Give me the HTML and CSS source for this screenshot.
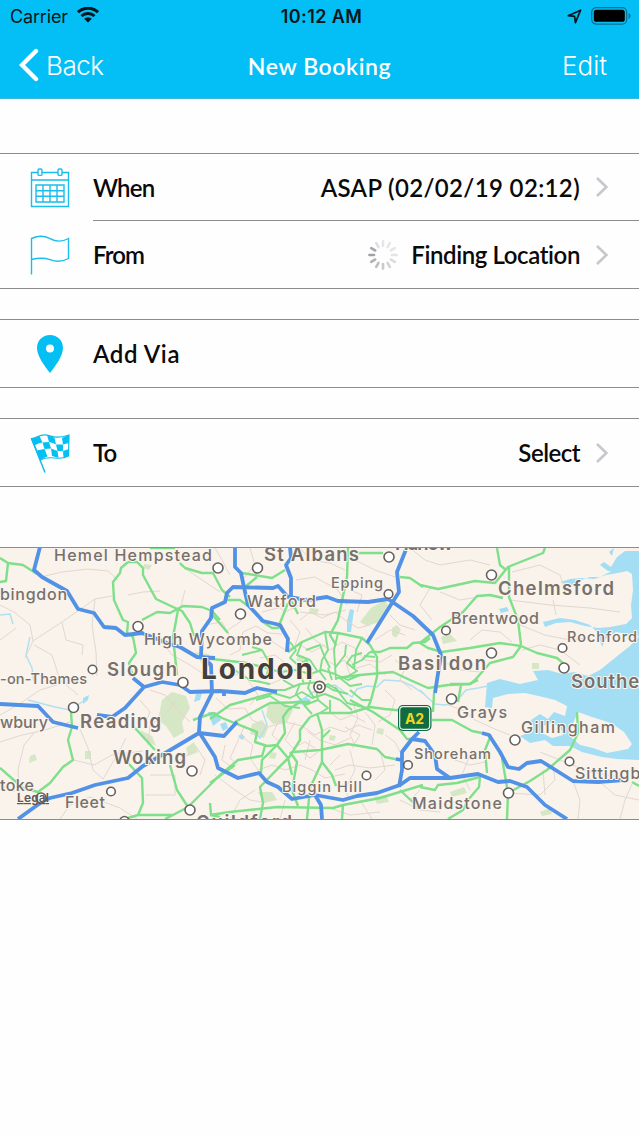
FILE: index.html
```
<!DOCTYPE html>
<html lang="en">

<head>
  <meta charset="UTF-8">
  <meta name="viewport" content="width=device-width, initial-scale=1.0">
  <title>New Booking</title>
  <link rel="stylesheet" href="styles.css">
</head>

<body>

  <header>
    <div class="status-bar">
      <div class="carrier">
        <span>Carrier</span>
        <svg width="22" height="16" viewBox="0 0 22 16">
          <path d="M1 5.2 A14.4 14.4 0 0 1 21 5.2" fill="none" stroke="#06161c" stroke-width="3" />
          <path d="M4.5 9 A9.4 9.4 0 0 1 17.5 9" fill="none" stroke="#06161c" stroke-width="3" />
          <path d="M11 15.6 L7.2 11.8 A5.4 5.4 0 0 1 14.8 11.8 Z" fill="#06161c" />
        </svg>
      </div>
      <div class="time">10:12 AM</div>
      <div class="battery">
        <svg width="15" height="15" viewBox="0 0 15 15">
          <path d="M1.2 6.7 L13.6 1.2 L8.4 13.6 L7.6 7.4 Z" fill="none" stroke="#06161c" stroke-width="1.7" stroke-linejoin="round" />
        </svg>
        <svg width="40" height="18" viewBox="0 0 40 18">
          <rect x=".7" y=".7" width="35" height="16.4" rx="4.5" fill="none" stroke="#06708f" stroke-width="1.2" />
          <rect x="2.8" y="2.8" width="31" height="12" rx="2.6" fill="#000" />
          <path d="M37.6 6 Q39.6 7 39.6 9 Q39.6 11 37.6 12 Z" fill="#06708f" />
        </svg>
      </div>
    </div>
    <nav class="navbar">
      <a class="back">
        <svg width="20" height="34" viewBox="0 0 20 34">
          <path d="M17 3 L3 17 L17 31" fill="none" stroke="#fff" stroke-width="4.4" stroke-linecap="round" />
        </svg>
        <span>Back</span>
      </a>
      <h1>New Booking</h1>
      <a class="edit">Edit</a>
    </nav>
  </header>

  <main>
    <section class="group">
      <div class="row">
        <svg class="icon" width="40" height="40" viewBox="0 0 40 40" fill="none" stroke="#1abdeb" stroke-width="1.4">
          <path d="M8 4.5 H1.5 V38.5 H38.5 V4.5 H32 M28 4.5 H12 M1.5 12 H38.5" />
          <rect x="8" y="1" width="4" height="6.4" rx="1.2" />
          <rect x="28" y="1" width="4" height="6.4" rx="1.2" />
          <path d="M6 17 H34 V34 H6 Z M6 22.7 H34 M6 28.3 H34 M13 17 V34 M20 17 V34 M27 17 V34" />
        </svg>
        <div class="cell divided">
          <span class="label when">When</span>
          <span class="value asap">ASAP (02/02/19 02:12)</span>
          <svg class="chevron" width="14" height="22" viewBox="0 0 14 22">
            <path d="M2 2 L11.4 11 L2 20" />
          </svg>
        </div>
      </div>
      <div class="row">
        <svg class="icon" width="40" height="40" viewBox="0 0 40 40" fill="none" stroke="#1abdeb" stroke-width="1.4">
          <path d="M1.5 39.5 V3.5 C8 .5 15 1 20 3.7 C26 7 33 6.500 38.500 3.500 V23.500 C33 26.500 26 27 20 24.700 C14 22.500 8 23 1.500 24.500" />
        </svg>
        <div class="cell">
          <span class="label from">From</span>
          <svg class="spinner" width="32" height="32" viewBox="-16 -16 32 32" stroke-width="2.6" stroke-linecap="round">
            <path d="M0 -9 V-13.600" stroke="#e6e6e9" />
            <path d="M0 -9 V-13.600" stroke="#e6e6e9" transform="rotate(30)" />
            <path d="M0 -9 V-13.600" stroke="#e6e6e9" transform="rotate(60)" />
            <path d="M0 -9 V-13.600" stroke="#e3e3e6" transform="rotate(90)" />
            <path d="M0 -9 V-13.600" stroke="#dcdcdf" transform="rotate(120)" />
            <path d="M0 -9 V-13.600" stroke="#d3d3d6" transform="rotate(150)" />
            <path d="M0 -9 V-13.600" stroke="#cacacd" transform="rotate(180)" />
            <path d="M0 -9 V-13.600" stroke="#bebec2" transform="rotate(210)" />
            <path d="M0 -9 V-13.600" stroke="#b2b2b6" transform="rotate(240)" />
            <path d="M0 -9 V-13.600" stroke="#a0a0a5" transform="rotate(270)" />
            <path d="M0 -9 V-13.600" stroke="#a8a8ac" transform="rotate(300)" />
            <path d="M0 -9 V-13.600" stroke="#dfdfe2" transform="rotate(330)" />
          </svg>
          <span class="value finding">Finding Location</span>
          <svg class="chevron" width="14" height="22" viewBox="0 0 14 22">
            <path d="M2 2 L11.4 11 L2 20" />
          </svg>
        </div>
      </div>
    </section>

    <section class="group">
      <div class="row">
        <svg class="icon" width="40" height="40" viewBox="0 0 40 40">
          <path fill-rule="evenodd" fill="#04bff3" d="M20 1 C27.500 1 33 6.500 33 14 C33 22 25.500 32 20 39 C14.500 32 7 22 7 14 C7 6.500 12.500 1 20 1 Z M20 10.500 A4 4 0 1 0 20 18.500 A4 4 0 1 0 20 10.500 Z" />
        </svg>
        <div class="cell">
          <span class="label via">Add Via</span>
        </div>
      </div>
    </section>

    <section class="group">
      <div class="row">
        <svg class="icon" width="40" height="40" viewBox="0 0 40 40">
          <path fill="#fff" stroke="#14b9e8" stroke-width="1.200" d="M1.500 5.500 C6 5.500 9 1.500 15 1.800 C21 2 24 7 39 2 L38.500 23 C28 29 21 21 10.500 27 Z" />
          <path fill="none" stroke="#14b9e8" stroke-width="1.500" d="M1.500 5.500 L15 39.500" />
          <g fill="#04bff3">
            <path d="M1.500 5.500 Q6 5 9.500 3 L12.500 9.500 Q8 10 4.500 12.500 Z" />
            <path d="M17 2 Q21 3 24.500 4.700 L26 11.500 Q23 9.500 19 9 Z" />
            <path d="M32 5 L39 2 V10 L33 11.500 Z" />
            <path d="M12.500 9.500 L19 9 L21 15.500 L14.500 16 Z" />
            <path d="M26 11.500 L33 11.500 V18 L27.500 18 Z" />
            <path d="M6.500 17.500 L14.500 16 L17.500 23.500 Q13 24.500 10.500 27 Z" />
            <path d="M21 15.500 L27.500 18 L28.500 25 Q24 23.500 22 23 Z" />
            <path d="M33 18 L39 16 L38.500 23 L33.500 25 Z" />
          </g>
        </svg>
        <div class="cell">
          <span class="label to">To</span>
          <span class="value select">Select</span>
          <svg class="chevron" width="14" height="22" viewBox="0 0 14 22">
            <path d="M2 2 L11.4 11 L2 20" />
          </svg>
        </div>
      </div>
    </section>

    <section class="map">
      <svg width="639" height="271" viewBox="0 548 639 271">
        <rect y="548" width="639" height="271" fill="#f9f3eb" />

        <!-- parks -->
        <g class="park">
          <path d="M162 700 l10 -8 14 4 4 12 -8 14 2 10 -10 6 -8 -12 -8 -6 Z" />
          <path d="M268 705 l16 -3 9 8 -6 12 -14 2 -7 -8 Z" />
          <path d="M252 724 l10 -4 6 8 -4 10 -14 -4 Z" />
          <path d="M371 608 l14 -8 3 6 -9 16 -12 4 -7 -4 Z" />
          <path d="M392 628 l5 -3 4 5 -5 8 -4 -3 Z" />
          <path d="M441 637 l8 -4 8 8 -14 3 Z" />
          <path d="M30 756 l5 -2 2 6 -8 3 Z M85 751 h6 v8 h-6 Z" />
          <path d="M186 748 l8 -6 4 10 -10 4 Z M140 730 l12 6 4 10 -12 -6 Z" />
          <path d="M258 792 l14 0 5 8 -13 3 Z M310 608 l9 1 -2 5 -8 -1 Z" />
          <path d="M378 728 l6 1 -1 6 -7 -2 Z M450 792 l14 -5 3 6 -15 4 Z" />
          <path d="M540 812 l10 -4 2 6 -10 2 Z M532 663 h7 v6 h-7 Z" />
          <path d="M195 652 l14 2 4 14 -10 -2 Z M374 797 l12 -2 3 7 -12 2 Z" />
          <path d="M144 564 l8 1 -3 5 -6 -2 Z M298 655 l6 1 -1 6 -7 -1 Z" />
          <path d="M270 752 l7 1 -2 6 -6 -1 Z M330 735 l6 1 -2 5 -5 -1 Z" />
        </g>

        <!-- sea, estuary and lakes -->
        <g class="water">
          <path d="M639 556 L628 558 L622 570 L612 571 L600 577 L590 577 L578 581 L570 586 L560 582 L570 579 L582 578 L594 579 L606 575 L618 573 L627 571 L632 574 L633 590 L631 605 L632 618 L626 624 L610 627 L598 628 L585 626 L570 622 L556 623 L545 627 L543 622 L560 618 L575 620 L590 625 L598 633 L602 647 L606 638 L616 632 L639 636 Z" />
          <path d="M639 636 L630 646 L616 657 L600 670 L588 676 L574 672 L562 674 L548 670 L533 671 L538 680 L520 684 L500 679 L487 683 L485 707 L492 708 L493 698 L508 694 L525 693 L543 697 L555 700 L567 706 L565 716 L554 712 L548 719 L540 714 L531 720 L528 733 L520 736 L530 743 L545 740 L553 746 L570 746 L582 752 L602 757 L617 759 L639 760 Z" />
          <path d="M639 551 L625 551 L617 557 L611 567 L604 562 L600 565 L608 571 L618 572 L639 568 Z M609 552 L614 548 L612 556 Z" />
          <path d="M347 621 l3 -12 4 1 -3 22 -4 0 Z M499 609 l8 -2 2 4 -8 2 Z" />
          <path d="M295 702 l10 -5 6 3 -6 6 Z M208 712 l8 0 5 8 -8 6 Z M238 736 l4 -2 3 3 -3 3 Z M83 698 l6 -3 -1 5 -5 4 Z" />
          <path d="M196 694 l6 -1 -2 7 -6 2 Z M220 724 l6 -2 2 6 -5 3 Z" />
        </g>
        <path class="land" d="M578 712 L592 717 L611 723 L624 732 L632 744 L628 749 L607 753 L593 748 L580 745 L572 738 L570 730 Z" />
        <path class="land" d="M541 727 L550 723 L560 726 L563 735 L552 738 L544 734 Z" />
        <path class="river" stroke-width="4" d="M420 690 L427 697 L435 704 L445 705 L456 702 L466 690 L478 688 L488 686" />
        <path class="river" stroke-width="3" d="M320 688 L335 685 L343 691 L352 697 L357 689 L367 686 L377 687 L384 680 L401 681 L412 686 L424 694" />
        <path class="river" d="M320 688 L310 694 L302 700 L290 703 M262 710 L267 725 L260 738 L252 730 M0 615 L10 614 L13 624 M30 637 L26 655 L32 668 L34 682 M28 700 L55 707 L70 710 L85 700" />

        <!-- minor roads -->
        <g class="lane">
          <path d="M0 605 L14 612 L30 625 L33 641 L25 658 M41 577 L62 572 L88 569 L108 571 L118 580 M33 641 L62 622 L95 599 L112 596 M62 622 L66 640 L83 645 L82 655" />
          <path d="M0 640 L16 628 M34 645 L52 655 L60 680 L78 695 M128 595 L143 592 L160 591 M185 590 L180 610 M220 592 L180 565 L178 548 M95 599 L92 625 L96 652 L97 676" />
          <path d="M0 715 L18 705 L40 690 L60 684 M0 742 L22 735 L45 730 L70 722 M20 800 L18 770 L24 745 L34 733 M80 729 L88 748 L93 770 L103 779 M103 779 L120 750 L126 738" />
          <path d="M74 760 L94 765 L112 755 L143 751 M150 775 H175 V795 H145 M60 819 L70 805 L90 797 L120 808 L137 819 M0 785 L15 792 M176 700 L165 715 L150 725 L148 745" />
          <path d="M215 548 L222 560 L230 575 M250 548 L255 565 L242 580 M300 548 L310 560 L330 563 L345 570 M296 580 L315 577 L338 590 L347 605 M300 612 L325 615 L346 610 M355 560 L375 570 L395 577" />
          <path d="M410 548 L425 560 L440 565 L470 560 L490 565 M430 588 L420 605 L432 620 M440 592 L460 600 L478 597 M512 572 L540 565 L560 575 L565 590 M510 600 L550 605 L590 608 L620 612 M556 615 L553 600" />
          <path d="M520 625 L545 635 L570 640 L585 638 M522 650 L540 645 L560 650 L580 665 M470 640 L482 630 L500 632 L512 642 M440 660 L460 670 L480 672 M448 705 L462 710 L475 720 L497 730 L510 735" />
          <path d="M400 800 L420 810 L440 812 M510 793 L540 795 L555 780 L553 765 M543 770 L545 795 M573 781 L580 800 L578 819 M600 782 L615 795 L639 800 M540 752 L560 760 L590 772 L620 777 M620 819 L625 800 L632 784" />
          <path d="M350 750 L355 770 L345 790 L350 800 M380 750 L385 770 L375 780 M335 770 L350 765 L370 768 L395 765 M345 727 L360 735 L352 748 M365 712 L375 725 L372 745 M385 735 L395 742 L400 752" />
          <path d="M215 775 L235 790 L250 800 L262 802 M230 819 L240 800 L255 790 M285 800 L280 819 M330 808 L350 815 L380 812 M360 800 L372 819 M420 790 L410 800 M455 760 L470 765 L485 762 M470 755 L462 775 L470 790" />
        </g>
        <g class="street">
          <path d="M222 640 L240 637 L255 645 L270 640 L285 650 L300 645 L312 652 L325 645 M230 655 L240 650 L243 632 L256 626 L268 633 L282 634 M245 610 L240 622 L228 630 M262 612 L278 608 L285 598" />
          <path d="M216 698 L228 709 L245 708 L252 720 L268 727 L285 722 L302 726 L315 735 L330 727 L345 732 L358 725 L372 730" />
          <path d="M240 735 L253 745 L250 758 L258 770 L272 765 L285 770 L300 765 L312 770 L325 778 L345 774 M245 725 L236 745 L230 758 L238 765 M300 750 L310 758 L318 752" />
          <path d="M300 620 L310 612 L322 618 L335 612 L345 620 L358 628 L370 625 M306 628 L315 640 L330 650 L342 642 L355 648 L365 660 L380 662 L392 655 M345 655 L357 668 L370 664 L385 675" />
          <path d="M260 658 L275 655 L288 665 L280 680 L268 685 L258 680 M248 680 L258 695 L250 705 M225 680 L240 673 L250 680 M385 690 L395 700 L390 715 L378 722 M352 700 L358 718 L350 735 L355 745" />
          <path d="M330 712 L340 720 L352 715 L365 722 M295 722 L285 740 L293 748 L305 742 L315 748 M308 732 L320 740 L335 745 L350 738 M280 718 L272 735 L280 742 M265 745 L262 760 M325 660 L335 665 L345 660 L350 675" />
          <path d="M290 620 L300 632 L295 645 M270 600 L285 612 L300 605 M350 590 L362 595 L357 612 M375 640 L390 630 L405 635 M395 660 L405 668 L400 680 L412 690 M390 615 L400 625 L415 630" />
          <path d="M160 640 L172 655 L190 665 L205 675 M150 690 L165 695 L178 710 L190 722 M195 745 L205 760 L200 775 M180 760 L192 752 M225 745 L222 760 L235 770 M140 700 L150 712 L145 725 M205 625 L222 622 L232 640 M310 740 L305 760 M340 755 L330 765" />
        </g>

        <!-- primary roads -->
        <g class="green">
          <path d="M0 558 L8 563 L23 565 L37 574 M8 563 L6 581 L0 582" />
          <path d="M128 562 L121 568 L120 573 L113 582 L114 600 L123 620 L128 622 L127 633 L133 637 L136 653 L129 663 L132 673" />
          <path d="M128 562 H137 L143 568 V575 L156 599 L173 607 L182 611 L190 623 L194 636" />
          <path d="M142 620 L157 612 L170 613 L183 606 L202 607 L212 611 L220 620 M178 610 L173 637 L177 675" />
          <path d="M150 548 h25 M180 563 L185 568 L202 573 L213 573 L222 590 L230 597 M242 573 L272 578 L285 570 M257 577 L245 587" />
          <path d="M227 600 L240 600 L248 606 M210 612 L228 633 M260 620 L272 628 L278 628 L288 603 M291 600 L298 614" />
          <path d="M348 547 L347 577 L338 620 L330 635 L336 645 M357 553 H383 M400 577 L410 578 L423 587" />
          <path d="M288 652 L302 642 L325 632 L338 633 L362 638 L370 645 L377 657 L377 677 L371 700 L367 710" />
          <path d="M420 585 L438 589 L475 581 L495 583 L508 567 L543 553 L545 548 M497 548 L500 565 L506 570 M509 567 V597 L518 620 L521 645" />
          <path d="M521 646 L500 643 L470 648 L442 652 L428 648 L420 643 L440 627 L463 612 L477 596 L490 595 L503 598" />
          <path d="M521 646 L537 653 L557 658 L564 664 M521 646 L513 657 L490 663 L475 680 L470 684 L450 684 M370 652 L380 652 L390 648 L407 648 L413 643 L425 642 L430 638" />
          <path d="M337 678 L360 675 L393 672 L410 680 L428 688 L448 685 L470 684 L478 680 M461 685 L458 702 M434 693 L433 712" />
          <path d="M71 712 L72 727 L68 740 L73 760 L63 767 L50 783 L38 792 L23 788 L0 768 M135 728 L155 750" />
          <path d="M128 763 L142 778 L143 803 L138 815 L173 815 L188 807 L220 775 L238 760 L262 756 L265 746 M170 765 L177 790 L188 807 M138 815 L125 819 M173 815 L165 819 M210 803 L211 815 L220 817" />
          <path d="M193 720 L213 713 L222 718 L257 732 L255 742 L267 746 L277 745 L288 758 M210 719 L230 705 L273 693 M235 722 L270 703 L310 702 M204 658 L247 663 L262 667" />
          <path d="M288 710 L283 717 L285 733 L277 745 L262 760 L261 773 M288 710 L300 702 M317 713 L322 730 V762 L310 788 L307 819 M322 762 L332 775 L336 786" />
          <path d="M310 717 L300 730 V740 L290 756 L260 787 L263 803 L260 819 M293 752 L320 750 L348 744 L377 749 L385 757 L400 760 M290 752 L297 762 L292 790 L298 806 M288 758 L292 775" />
          <path d="M320 713 L350 713 L370 707 L385 709 L406 711 M350 700 L373 712 L400 730 L407 739 L418 739 M210 815 L230 812 L277 807 L333 808 L343 805 L380 798 L423 785 M343 805 L342 819" />
          <path d="M210 783 L235 765 M400 790 L418 807 M420 787 L435 790 L438 785 L457 783 L480 777 L479 787 L468 800 L463 810 L448 819" />
          <path d="M491 735 L485 750 L487 773 M502 758 L508 793 L507 819 M508 793 L530 781 L547 770 L570 750 L578 733 L577 712 M432 720 H452 L472 731 L482 733 M632 782 L639 786" />
        </g>
        <g class="green inner">
          <path d="M290 642 L296 650 L290 658 L298 665 L306 660 L312 670 M302 642 L297 655 L310 660 L318 672 M306 650 L320 645 L325 658 L330 668 M338 633 L334 650 L336 680 M346 645 L345 655 L335 668" />
          <path d="M362 653 L352 656 L347 663 L357 671 L345 678 M362 638 L356 650 L354 668 M370 652 L362 660 L352 665 M325 632 L328 650 L322 660 L320 672 L326 680" />
          <path d="M262 667 L280 672 L296 670 L310 674 L322 670 L335 674 L348 680 L360 675 M270 690 L285 690 L300 684 L320 682 L333 690 L348 694 M273 693 L290 698 L302 692 L312 698 L325 694 L340 700" />
          <path d="M300 684 L296 694 L305 705 L318 700 L328 708 L320 713 L310 717 M304 705 L312 714 M318 700 L316 690 L328 684 L338 690 M312 674 L308 688 L314 698 M328 668 L332 680 M300 673 L304 684" />
          <path d="M283 680 L295 687 M256 700 L270 696 L285 706 L300 708 M340 700 L352 710 M350 690 L362 700 L371 700 M335 687 L347 703 L367 708 M242 655 L262 650 L270 664 L265 680 M340 678 L350 686 L362 684" />
          <path d="M252 647 L262 650 M230 667 L250 680 L270 684 M330 730 L322 738 M290 757 L278 768 M330 700 L330 712 M375 657 L364 656" />
        </g>

        <!-- motorways -->
        <g class="blue">
          <path d="M40 547 L34 570 L42 577 L67 591 L78 609 L94 613 L104 627 L116 628 L125 635 L142 633 L167 643 L180 647 L197 657 L215 658" />
          <path d="M235 547 V567 L241 573 L245 592 L248 605 L263 621 L280 625 L288 639 L287 652 M290 547 L291 558 L286 565 L291 578 V598" />
          <path d="M435 693 L437 680 L441 655 L433 635 L413 616 L388 599 L368 602 L338 601 L327 597 L307 600 L288 597 L278 586 L273 588 L233 587 L227 593 L225 602 L212 608 L211 618 L202 631 L201 656 L211 665 L212 693 L200 717 L199 732 L215 757 L218 768 L238 778 L259 773 L267 782 L278 787 L292 799 L315 795 L343 800 L357 796 L377 793 L400 785 L410 778 L450 778 L478 774 L498 782 L510 781 L527 787 L545 805 L567 819" />
          <path d="M407 547 L397 572 L399 592 L392 603 L367 643" />
          <path d="M133 678 L144 687 L162 682 L180 685 L190 692 L220 691 L245 693 L257 688 L277 692 M144 687 L125 708 L112 717 L97 715 M0 704 L38 706 L53 722 L78 728 M224 690 V696" />
          <path d="M18 819 L43 801 L50 798 L72 793 L95 785 L128 778 L143 766 L167 752 L199 733 L224 736 L237 722" />
          <path d="M315 795 L321 805 L322 819 M399 787 L402 770 V752 L412 739 L419 732 M412 739 L425 741 L435 755 L437 769 L450 778 M396 759 L402 760" />
          <path d="M482 733 L489 735 L500 752 L508 767 L519 769 L527 763 L541 761 L573 781 L598 782 L623 780" />
        </g>

        <!-- town markers -->
        <g class="dot">
          <circle cx="218" cy="568" r="5" />
          <circle cx="257.500" cy="568" r="5" />
          <circle cx="389" cy="557" r="5" />
          <circle cx="388.500" cy="594" r="4.300" />
          <circle cx="240.500" cy="614" r="5" />
          <circle cx="138" cy="626.500" r="5" />
          <circle cx="92.500" cy="669.500" r="4.300" />
          <circle cx="183" cy="682.500" r="5" />
          <circle cx="73.500" cy="707.500" r="5" />
          <circle cx="491.500" cy="575" r="5" />
          <circle cx="446" cy="630.500" r="4.300" />
          <circle cx="491.500" cy="653" r="5" />
          <circle cx="562.500" cy="648" r="4.300" />
          <circle cx="564" cy="668" r="5" />
          <circle cx="451.500" cy="699" r="5" />
          <circle cx="515" cy="740" r="5" />
          <circle cx="569.500" cy="761.500" r="4.300" />
          <circle cx="508.500" cy="793" r="5" />
          <circle cx="408" cy="765" r="4.300" />
          <circle cx="366.500" cy="775.500" r="4.300" />
          <circle cx="192" cy="771" r="5" />
          <circle cx="111" cy="791.500" r="4.300" />
          <circle cx="190" cy="810" r="5" />
          <circle cx="41" cy="798" r="5" />
          <circle cx="124.500" cy="821" r="4.500" />
          <circle cx="203" cy="822" r="5" />
          <circle cx="319.500" cy="687" r="5.600" />
          <circle cx="319.500" cy="687" r="2.200" />
        </g>

        <!-- A2 road shield -->
        <rect x="398" y="705" width="33.500" height="26" rx="5" fill="#0c6849" />
        <rect x="399.700" y="706.700" width="30" height="22.600" rx="3.500" fill="#126b3e" stroke="#e8f2e8" stroke-width="1.200" />
        <text class="shield" x="405" y="723.500" textLength="19">A2</text>

        <g class="town">
          <text x="54" y="560.500" textLength="158">Hemel Hempstead</text>
          <text x="0" y="600" textLength="67">bingdon</text>
          <text x="247" y="607" textLength="69">Watford</text>
          <text x="144" y="645" textLength="128">High Wycombe</text>
          <text x="457" y="718" textLength="50">Grays</text>
          <text x="521" y="733" textLength="94">Gillingham</text>
          <text x="575" y="779" textLength="76">Sittingbo</text>
          <text x="0" y="728" textLength="48">wbury</text>
          <text x="0" y="791" textLength="34">toke</text>
          <text x="65" y="808" textLength="40">Fleet</text>
          <text x="412" y="809" textLength="90">Maidstone</text>
          <text x="451" y="624" textLength="88">Brentwood</text>
        </g>
        <g class="village">
          <text x="331" y="588" textLength="52">Epping</text>
          <text x="567" y="641.500" textLength="70">Rochford</text>
          <text x="0" y="684" textLength="87">-on-Thames</text>
          <text x="282" y="792" textLength="80">Biggin Hill</text>
          <text x="414" y="758.500" textLength="77">Shoreham</text>
        </g>
        <g class="city">
          <text x="264" y="561" textLength="95">St Albans</text>
          <text x="498" y="595" textLength="116">Chelmsford</text>
          <text x="398" y="670" textLength="88">Basildon</text>
          <text x="107" y="675.500" textLength="70">Slough</text>
          <text x="571" y="688" textLength="93">Southend</text>
          <text x="80" y="728" textLength="81">Reading</text>
          <text x="113" y="764" textLength="73">Woking</text>
          <text x="196" y="828.500" textLength="96">Guildford</text>
          <text x="395" y="550" textLength="58">Harlow</text>
        </g>
        <text class="capital" x="201" y="679" textLength="112">London</text>
        <text class="legal" x="17" y="802" textLength="32">Legal</text>
      </svg>
    </section>
  </main>

</body>

</html>
```

FILE: styles.css
```
/* Reset styles */
* {
  margin: 0;
  padding: 0;
  box-sizing: border-box;
}

body {
  font-family: "Futura", "Lato", sans-serif;
  background-color: #fefefe;
  color: #0a0a0a;
}

svg {
  display: block;
  flex-shrink: 0;
}

/* Header */
header {
  height: 99px;
  background-color: #04bff5;
  border-bottom: 1px solid #3fb5d8;
}

.status-bar {
  display: grid;
  grid-template-columns: 1fr auto 1fr;
  align-items: center;
  height: 32px;
  padding: 0 8px 0 10px;
  font-family: "Inter", sans-serif;
  font-size: 18px;
  color: #06161c;
}

.carrier {
  display: flex;
  align-items: center;
  gap: 9px;
  letter-spacing: -0.15px;
}

.carrier svg {
  margin-top: -2px;
}

.time {
  padding-left: 2px;
  font-weight: 600;
  letter-spacing: 0.4px;
}

.battery {
  display: flex;
  align-items: center;
  justify-content: flex-end;
  gap: 9px;
}

.navbar {
  display: grid;
  grid-template-columns: 1fr auto 1fr;
  align-items: center;
  height: 66px;
  padding: 0 32px 0 32px;
  color: #fff;
}

.back,
.edit {
  font-family: "Inter", sans-serif;
  font-size: 26px;
  font-weight: 300;
}

.back {
  display: flex;
  align-items: center;
  gap: 7px;
  margin-left: -13px;
  letter-spacing: -0.5px;
}

.edit {
  text-align: right;
}

.navbar h1 {
  padding-top: 1px;
  font-size: 23px;
  font-weight: 600;
  letter-spacing: 0.6px;
}

/* Rows */
main {
  padding-top: 54px;
}

.group {
  border-top: 1px solid #8b8b90;
  border-bottom: 1px solid #8b8b90;
  margin-bottom: 30px;
}

.group:first-child {
  padding-bottom: 0;
}

.row {
  display: flex;
  align-items: center;
  gap: 23px;
  height: 67px;
  padding-left: 30px;
}

.cell {
  flex: 1;
  display: flex;
  align-items: center;
  height: 100%;
  padding-right: 30px;
  font-size: 24px;
  font-weight: 600;
  font-variant-ligatures: none;
}

.divided {
  border-bottom: 1px solid #8b8b90;
}

.label {
  margin-right: auto;
}

.when {
  letter-spacing: -0.8px;
}

.from {
  letter-spacing: -0.9px;
}

.via {
  letter-spacing: 0.6px;
}

.to {
  letter-spacing: -1px;
}

.value {
  margin-right: 15px;
}

.asap {
  letter-spacing: 0.35px;
}

.finding {
  letter-spacing: -0.4px;
}

.select {
  letter-spacing: -0.5px;
}

.spinner {
  margin-right: 12px;
}

.chevron path {
  fill: none;
  stroke: #c7c7cc;
  stroke-width: 2.6;
}

/* Map */
.map {
  margin-top: 60px;
  border-top: 1px solid #8b8b90;
  border-bottom: 1px solid #8b8b90;
}

.park {
  fill: #d6e7c6;
}

.water {
  fill: #a3def4;
}

.land {
  fill: #f9f3eb;
}

.river {
  fill: none;
  stroke: #b3e0ef;
  stroke-width: 1.5;
}

.lane,
.street,
.green,
.blue {
  fill: none;
  stroke-linejoin: round;
}

.lane {
  stroke: #e0d8d2;
  stroke-width: 1;
}

.street {
  stroke: #e9d3cf;
  stroke-width: 1;
}

.green {
  stroke: #7fdf8a;
  stroke-width: 2.4;
}

.inner {
  stroke-width: 1.9;
}

.blue {
  stroke: #5191e6;
  stroke-width: 3.8;
}

.dot {
  fill: #fff;
  stroke: #67605c;
  stroke-width: 1.6;
}

.map text {
  font-family: "Inter", sans-serif;
  fill: #77706c;
  stroke: #faf5ee;
  stroke-width: 2px;
  stroke-linejoin: round;
  paint-order: stroke;
}

.map .town {
  font-size: 16px;
  font-weight: 500;
}

.map .village {
  font-size: 14.5px;
  font-weight: 500;
}

.map .city {
  font-size: 18.5px;
  font-weight: 600;
}

.map .capital {
  font-size: 28px;
  font-weight: 700;
  fill: #453f3b;
}

.map .shield {
  font-size: 14px;
  font-weight: 700;
  fill: #f2d51f;
  stroke: none;
}

.map .legal {
  font-size: 12px;
  font-weight: 600;
  fill: #5c5855;
  stroke: none;
  text-decoration: underline;
}
```
